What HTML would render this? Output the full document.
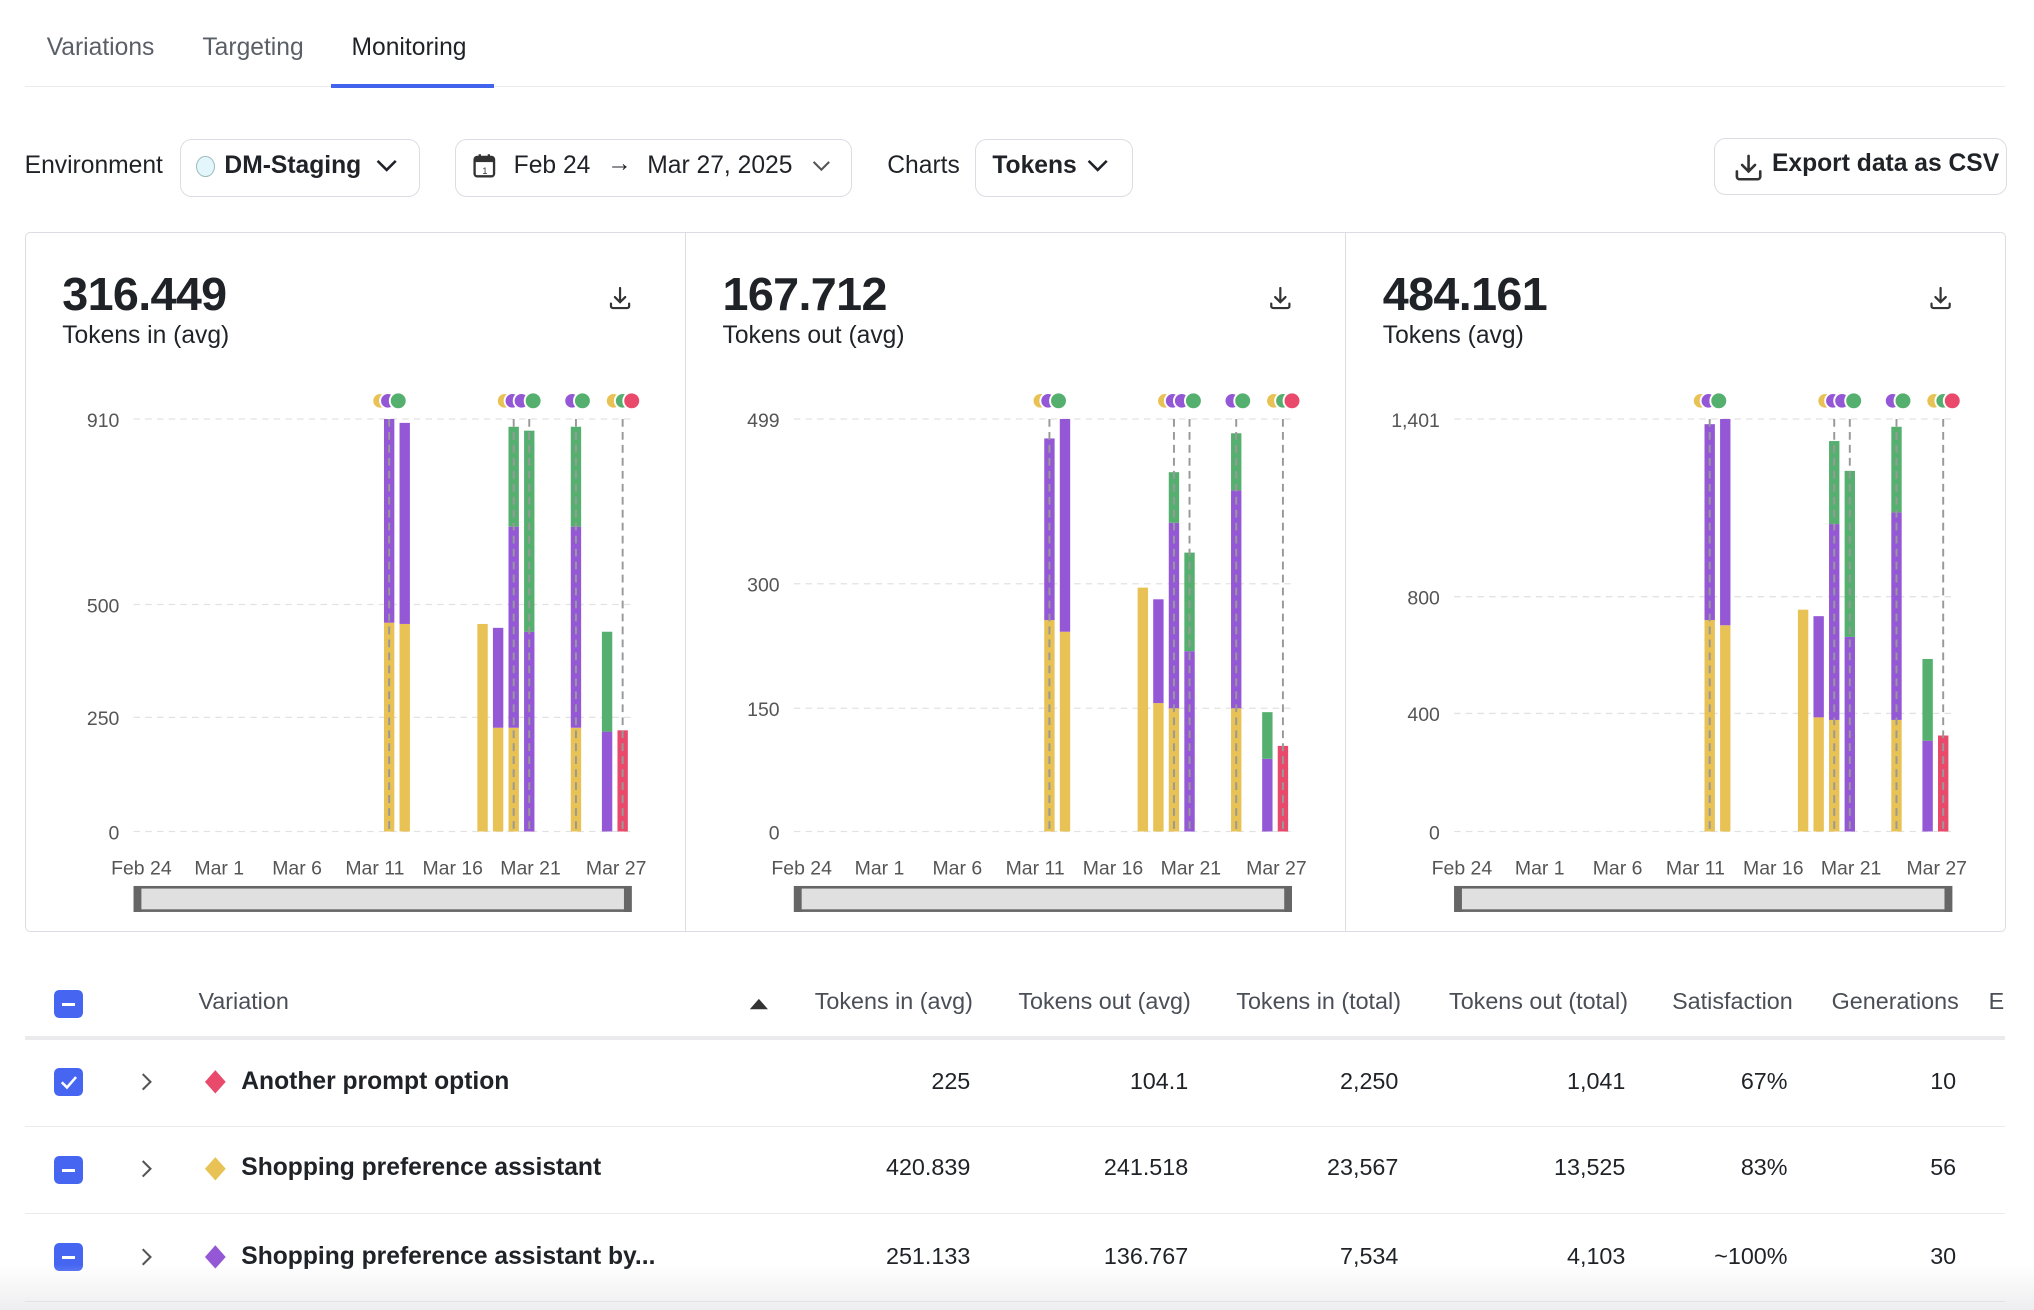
<!DOCTYPE html>
<html><head><meta charset="utf-8"><style>
html,body{margin:0;padding:0;background:#fff;overflow:hidden}
body{width:2034px;height:1310px}
#r{zoom:1.29719;width:1568px;height:1010px;position:relative;font-family:"Liberation Sans",sans-serif;color:#1f2328}
.a{position:absolute;white-space:nowrap}
.box{position:absolute;border:1px solid #dcdde3;border-radius:9px;background:#fff}
.th{position:absolute;top:762px;font-size:18px;color:#4a4f57;text-align:right}
.td{position:absolute;font-size:18px;text-align:right}
.cb{position:absolute;left:42px;width:22px;height:22px;border-radius:4px;background:#4666f2}
.cb i{position:absolute;left:6px;top:10px;width:10px;height:2.5px;background:#fff}
.sep{position:absolute;left:19px;width:1527px;height:1px;background:#ebebee}
</style></head><body><div id="r">
<div class="a" style="left:36px;top:26px;font-size:19px;color:#5a5f67">Variations</div>
<div class="a" style="left:156px;top:26px;font-size:19px;color:#5a5f67">Targeting</div>
<div class="a" style="left:271px;top:26px;font-size:19px;color:#1f2328">Monitoring</div>
<div class="a" style="left:19px;top:66px;width:1527px;height:1px;background:#ebebee"></div>
<div class="a" style="left:255px;top:65px;width:126px;height:3px;background:#4263eb"></div>

<div class="a" style="left:19px;top:117px;font-size:19px">Environment</div>
<div class="box" style="left:139px;top:107px;width:183px;height:43px"></div>
<div class="a" style="left:151px;top:120px;width:13px;height:15px;border-radius:50%;border:1px solid #9bb;background:#e2f6fb"></div>
<div class="a" style="left:173px;top:117px;font-size:19px;font-weight:bold">DM-Staging</div>
<svg class="a" style="left:289px;top:121px" width="18" height="14"><path d="M2 3l7 7 7-7" stroke="#1f2328" stroke-width="2" fill="none"/></svg>

<div class="box" style="left:351px;top:107px;width:304px;height:43px"></div>
<svg class="a" style="left:364px;top:118px" width="20" height="20"><rect x="2" y="3" width="15" height="15" rx="2" fill="none" stroke="#333" stroke-width="1.8"/><rect x="2" y="3" width="15" height="4" fill="#333"/><path d="M6 1v4M13 1v4" stroke="#333" stroke-width="1.8"/><text x="8" y="16" font-size="7" fill="#333">1</text></svg>
<div class="a" style="left:396px;top:117px;font-size:19px">Feb 24</div>
<div class="a" style="left:468px;top:116px;font-size:19px">→</div>
<div class="a" style="left:499px;top:117px;font-size:19px">Mar 27, 2025</div>
<svg class="a" style="left:625px;top:122px" width="16" height="12"><path d="M2 3l6 6 6-6" stroke="#555" stroke-width="1.6" fill="none"/></svg>

<div class="a" style="left:684px;top:117px;font-size:19px">Charts</div>
<div class="box" style="left:752px;top:107px;width:120px;height:43px"></div>
<div class="a" style="left:765px;top:117px;font-size:19px;font-weight:bold">Tokens</div>
<svg class="a" style="left:837px;top:121px" width="18" height="14"><path d="M2 3l7 7 7-7" stroke="#1f2328" stroke-width="2" fill="none"/></svg>

<div class="box" style="left:1321px;top:106px;width:225px;height:43px"></div>
<svg class="a" style="left:1336px;top:117px" width="24" height="24"><path d="M12 3v12M7 10l5 5 5-5M3 15v4a2 2 0 0 0 2 2h14a2 2 0 0 0 2-2v-4" stroke="#333" stroke-width="2" fill="none" stroke-linecap="round"/></svg>
<div class="a" style="left:1366px;top:116px;font-size:19px;font-weight:bold">Export data as CSV</div>

<div class="box" style="left:19px;top:179px;width:1526px;height:538px;border-radius:4px"></div>
<div class="a" style="left:528px;top:180px;width:1px;height:538px;background:#dcdde3"></div>
<div class="a" style="left:1037px;top:180px;width:1px;height:538px;background:#dcdde3"></div>

<div class="a" style="left:48px;top:206px;font-size:36px;font-weight:bold;letter-spacing:-0.5px">316.449</div>
<div class="a" style="left:48px;top:248px;font-size:19px">Tokens in (avg)</div>
<div class="a" style="left:557px;top:206px;font-size:36px;font-weight:bold;letter-spacing:-0.5px">167.712</div>
<div class="a" style="left:557px;top:248px;font-size:19px">Tokens out (avg)</div>
<div class="a" style="left:1066px;top:206px;font-size:36px;font-weight:bold;letter-spacing:-0.5px">484.161</div>
<div class="a" style="left:1066px;top:248px;font-size:19px">Tokens (avg)</div>

<svg class="a" style="left:0;top:0" width="1568" height="1010" font-family="Liberation Sans, sans-serif">
<defs>
<g id="dl"><path d="M8 1v11M4 8l4 4 4-4M1 13v2a1.5 1.5 0 0 0 1.5 1.5h11A1.5 1.5 0 0 0 15 15v-2" stroke="#333" stroke-width="1.7" fill="none" stroke-linecap="round"/></g>
<g id="common">
<g font-size="15" fill="#555" text-anchor="middle">
<text x="109" y="674">Feb 24</text><text x="169" y="674">Mar 1</text><text x="229" y="674">Mar 6</text><text x="289" y="674">Mar 11</text><text x="349" y="674">Mar 16</text><text x="409" y="674">Mar 21</text><text x="475" y="674">Mar 27</text>
</g>
<rect x="104" y="684" width="382" height="18" fill="#e0e0e0" stroke="#666" stroke-width="2"/>
<rect x="103" y="683" width="6" height="20" fill="#666"/><rect x="481" y="683" width="6" height="20" fill="#666"/>
<g stroke="#999" stroke-width="1.5" stroke-dasharray="6 4"><path d="M300 323V641M396 323V641M408 323V641M444 323V641M480 323V641"/></g>
<g stroke="#fff" stroke-width="1.5">
<circle cx="293" cy="309" r="6" fill="#e8c254"/><circle cx="299" cy="309" r="6" fill="#9457d6"/><circle cx="307" cy="309" r="6.5" fill="#55b06f"/>
<circle cx="389" cy="309" r="6" fill="#e8c254"/><circle cx="395" cy="309" r="6" fill="#9457d6"/><circle cx="402" cy="309" r="6" fill="#9457d6"/><circle cx="411" cy="309" r="6.5" fill="#55b06f"/>
<circle cx="441" cy="309" r="6" fill="#9457d6"/><circle cx="449" cy="309" r="6.5" fill="#55b06f"/>
<circle cx="473" cy="309" r="6" fill="#e8c254"/><circle cx="480" cy="309" r="6" fill="#55b06f"/><circle cx="487" cy="309" r="6.5" fill="#e94a6b"/>
</g>
</g>
</defs>

<g>
<g stroke="#e2e2e2" stroke-dasharray="5 4"><path d="M103 323H490M103 466H490M103 553H490M103 641H490"/></g>
<g font-size="15" fill="#555" text-anchor="end"><text x="92" y="329">910</text><text x="92" y="472">500</text><text x="92" y="559">250</text><text x="92" y="647">0</text></g>
<rect x="296" y="480" width="8" height="161" fill="#e8c254"/><rect x="296" y="323" width="8" height="157" fill="#9457d6"/>
<rect x="308" y="481" width="8" height="160" fill="#e8c254"/><rect x="308" y="326" width="8" height="155" fill="#9457d6"/>
<rect x="368" y="481" width="8" height="160" fill="#e8c254"/>
<rect x="380" y="561" width="8" height="80" fill="#e8c254"/><rect x="380" y="484" width="8" height="77" fill="#9457d6"/>
<rect x="392" y="561" width="8" height="80" fill="#e8c254"/><rect x="392" y="406" width="8" height="155" fill="#9457d6"/><rect x="392" y="329" width="8" height="77" fill="#55b06f"/>
<rect x="404" y="487" width="8" height="154" fill="#9457d6"/><rect x="404" y="332" width="8" height="155" fill="#55b06f"/>
<rect x="440" y="561" width="8" height="80" fill="#e8c254"/><rect x="440" y="406" width="8" height="155" fill="#9457d6"/><rect x="440" y="329" width="8" height="77" fill="#55b06f"/>
<rect x="464" y="564" width="8" height="77" fill="#9457d6"/><rect x="464" y="487" width="8" height="77" fill="#55b06f"/>
<rect x="476" y="563" width="8" height="78" fill="#e94a6b"/>
<use href="#common"/>
<use href="#dl" x="470" y="221"/>
</g>

<g transform="translate(509,0)">
<g stroke="#e2e2e2" stroke-dasharray="5 4"><path d="M103 323H490M103 450H490M103 546H490M103 641H490"/></g>
<g font-size="15" fill="#555" text-anchor="end"><text x="92" y="329">499</text><text x="92" y="456">300</text><text x="92" y="552">150</text><text x="92" y="647">0</text></g>
<rect x="296" y="478" width="8" height="163" fill="#e8c254"/><rect x="296" y="338" width="8" height="140" fill="#9457d6"/>
<rect x="308" y="487" width="8" height="154" fill="#e8c254"/><rect x="308" y="323" width="8" height="164" fill="#9457d6"/>
<rect x="368" y="453" width="8" height="188" fill="#e8c254"/>
<rect x="380" y="542" width="8" height="99" fill="#e8c254"/><rect x="380" y="462" width="8" height="80" fill="#9457d6"/>
<rect x="392" y="546" width="8" height="95" fill="#e8c254"/><rect x="392" y="403" width="8" height="143" fill="#9457d6"/><rect x="392" y="364" width="8" height="39" fill="#55b06f"/>
<rect x="404" y="502" width="8" height="139" fill="#9457d6"/><rect x="404" y="426" width="8" height="76" fill="#55b06f"/>
<rect x="440" y="546" width="8" height="95" fill="#e8c254"/><rect x="440" y="378" width="8" height="168" fill="#9457d6"/><rect x="440" y="334" width="8" height="44" fill="#55b06f"/>
<rect x="464" y="585" width="8" height="56" fill="#9457d6"/><rect x="464" y="549" width="8" height="36" fill="#55b06f"/>
<rect x="476" y="575" width="8" height="66" fill="#e94a6b"/>
<use href="#common"/>
<use href="#dl" x="470" y="221"/>
</g>

<g transform="translate(1018,0)">
<g stroke="#e2e2e2" stroke-dasharray="5 4"><path d="M103 323H490M103 460H490M103 550H490M103 641H490"/></g>
<g font-size="15" fill="#555" text-anchor="end"><text x="92" y="329">1,401</text><text x="92" y="466">800</text><text x="92" y="556">400</text><text x="92" y="647">0</text></g>
<rect x="296" y="478" width="8" height="163" fill="#e8c254"/><rect x="296" y="327" width="8" height="151" fill="#9457d6"/>
<rect x="308" y="482" width="8" height="159" fill="#e8c254"/><rect x="308" y="323" width="8" height="159" fill="#9457d6"/>
<rect x="368" y="470" width="8" height="171" fill="#e8c254"/>
<rect x="380" y="553" width="8" height="88" fill="#e8c254"/><rect x="380" y="475" width="8" height="78" fill="#9457d6"/>
<rect x="392" y="555" width="8" height="86" fill="#e8c254"/><rect x="392" y="404" width="8" height="151" fill="#9457d6"/><rect x="392" y="340" width="8" height="64" fill="#55b06f"/>
<rect x="404" y="491" width="8" height="150" fill="#9457d6"/><rect x="404" y="363" width="8" height="128" fill="#55b06f"/>
<rect x="440" y="555" width="8" height="86" fill="#e8c254"/><rect x="440" y="395" width="8" height="160" fill="#9457d6"/><rect x="440" y="329" width="8" height="66" fill="#55b06f"/>
<rect x="464" y="571" width="8" height="70" fill="#9457d6"/><rect x="464" y="508" width="8" height="63" fill="#55b06f"/>
<rect x="476" y="567" width="8" height="74" fill="#e94a6b"/>
<use href="#common"/>
<use href="#dl" x="470" y="221"/>
</g>

<path d="M578 778l7-8 7 8z" fill="#333"/>
<g stroke="#555" stroke-width="1.6" fill="none"><path d="M110 828l6 6-6 6M110 895l6 6-6 6M110 963l6 6-6 6"/></g>
<path d="M166 825l8 9-8 9-8-9z" fill="#e94a6b"/>
<path d="M166 892l8 9-8 9-8-9z" fill="#e8c254"/>
<path d="M166 960l8 9-8 9-8-9z" fill="#9457d6"/>
</svg>

<div class="cb" style="top:763px"><i></i></div>
<div class="th" style="left:153px;text-align:left">Variation</div>
<div class="th" style="right:818px">Tokens in (avg)</div>
<div class="th" style="right:650px">Tokens out (avg)</div>
<div class="th" style="right:488px">Tokens in (total)</div>
<div class="th" style="right:313px">Tokens out (total)</div>
<div class="th" style="right:186px">Satisfaction</div>
<div class="th" style="right:58px">Generations</div>
<div class="th" style="left:1533px;text-align:left;width:13px;overflow:hidden">Er</div>
<div class="a" style="left:19px;top:799px;width:1527px;height:3px;background:#ebebee"></div>

<div class="cb" style="top:823px"><svg width="22" height="22" style="position:absolute;left:0;top:0"><path d="M6 11l4 4 7-8" stroke="#fff" stroke-width="2" fill="none"/></svg></div>
<div class="a" style="left:186px;top:823px;font-size:19px;font-weight:bold">Another prompt option</div>
<div class="td" style="top:823px;right:820px">225</div>
<div class="td" style="top:823px;right:652px">104.1</div>
<div class="td" style="top:823px;right:490px">2,250</div>
<div class="td" style="top:823px;right:315px">1,041</div>
<div class="td" style="top:823px;right:190px">67%</div>
<div class="td" style="top:823px;right:60px">10</div>
<div class="sep" style="top:868px"></div>

<div class="cb" style="top:891px"><i></i></div>
<div class="a" style="left:186px;top:890px;font-size:19px;font-weight:bold">Shopping preference assistant</div>
<div class="td" style="top:890px;right:820px">420.839</div>
<div class="td" style="top:890px;right:652px">241.518</div>
<div class="td" style="top:890px;right:490px">23,567</div>
<div class="td" style="top:890px;right:315px">13,525</div>
<div class="td" style="top:890px;right:190px">83%</div>
<div class="td" style="top:890px;right:60px">56</div>
<div class="sep" style="top:935px"></div>

<div class="cb" style="top:958px"><i></i></div>
<div class="a" style="left:186px;top:958px;font-size:19px;font-weight:bold">Shopping preference assistant by...</div>
<div class="td" style="top:958px;right:820px">251.133</div>
<div class="td" style="top:958px;right:652px">136.767</div>
<div class="td" style="top:958px;right:490px">7,534</div>
<div class="td" style="top:958px;right:315px">4,103</div>
<div class="td" style="top:958px;right:190px">~100%</div>
<div class="td" style="top:958px;right:60px">30</div>
<div class="a" style="left:0;top:975px;width:1568px;height:35px;background:linear-gradient(rgba(240,240,242,0),rgba(236,236,238,0.9))"></div>
<div class="sep" style="top:1003px;background:#e2e2e6"></div>
</div></body></html>
